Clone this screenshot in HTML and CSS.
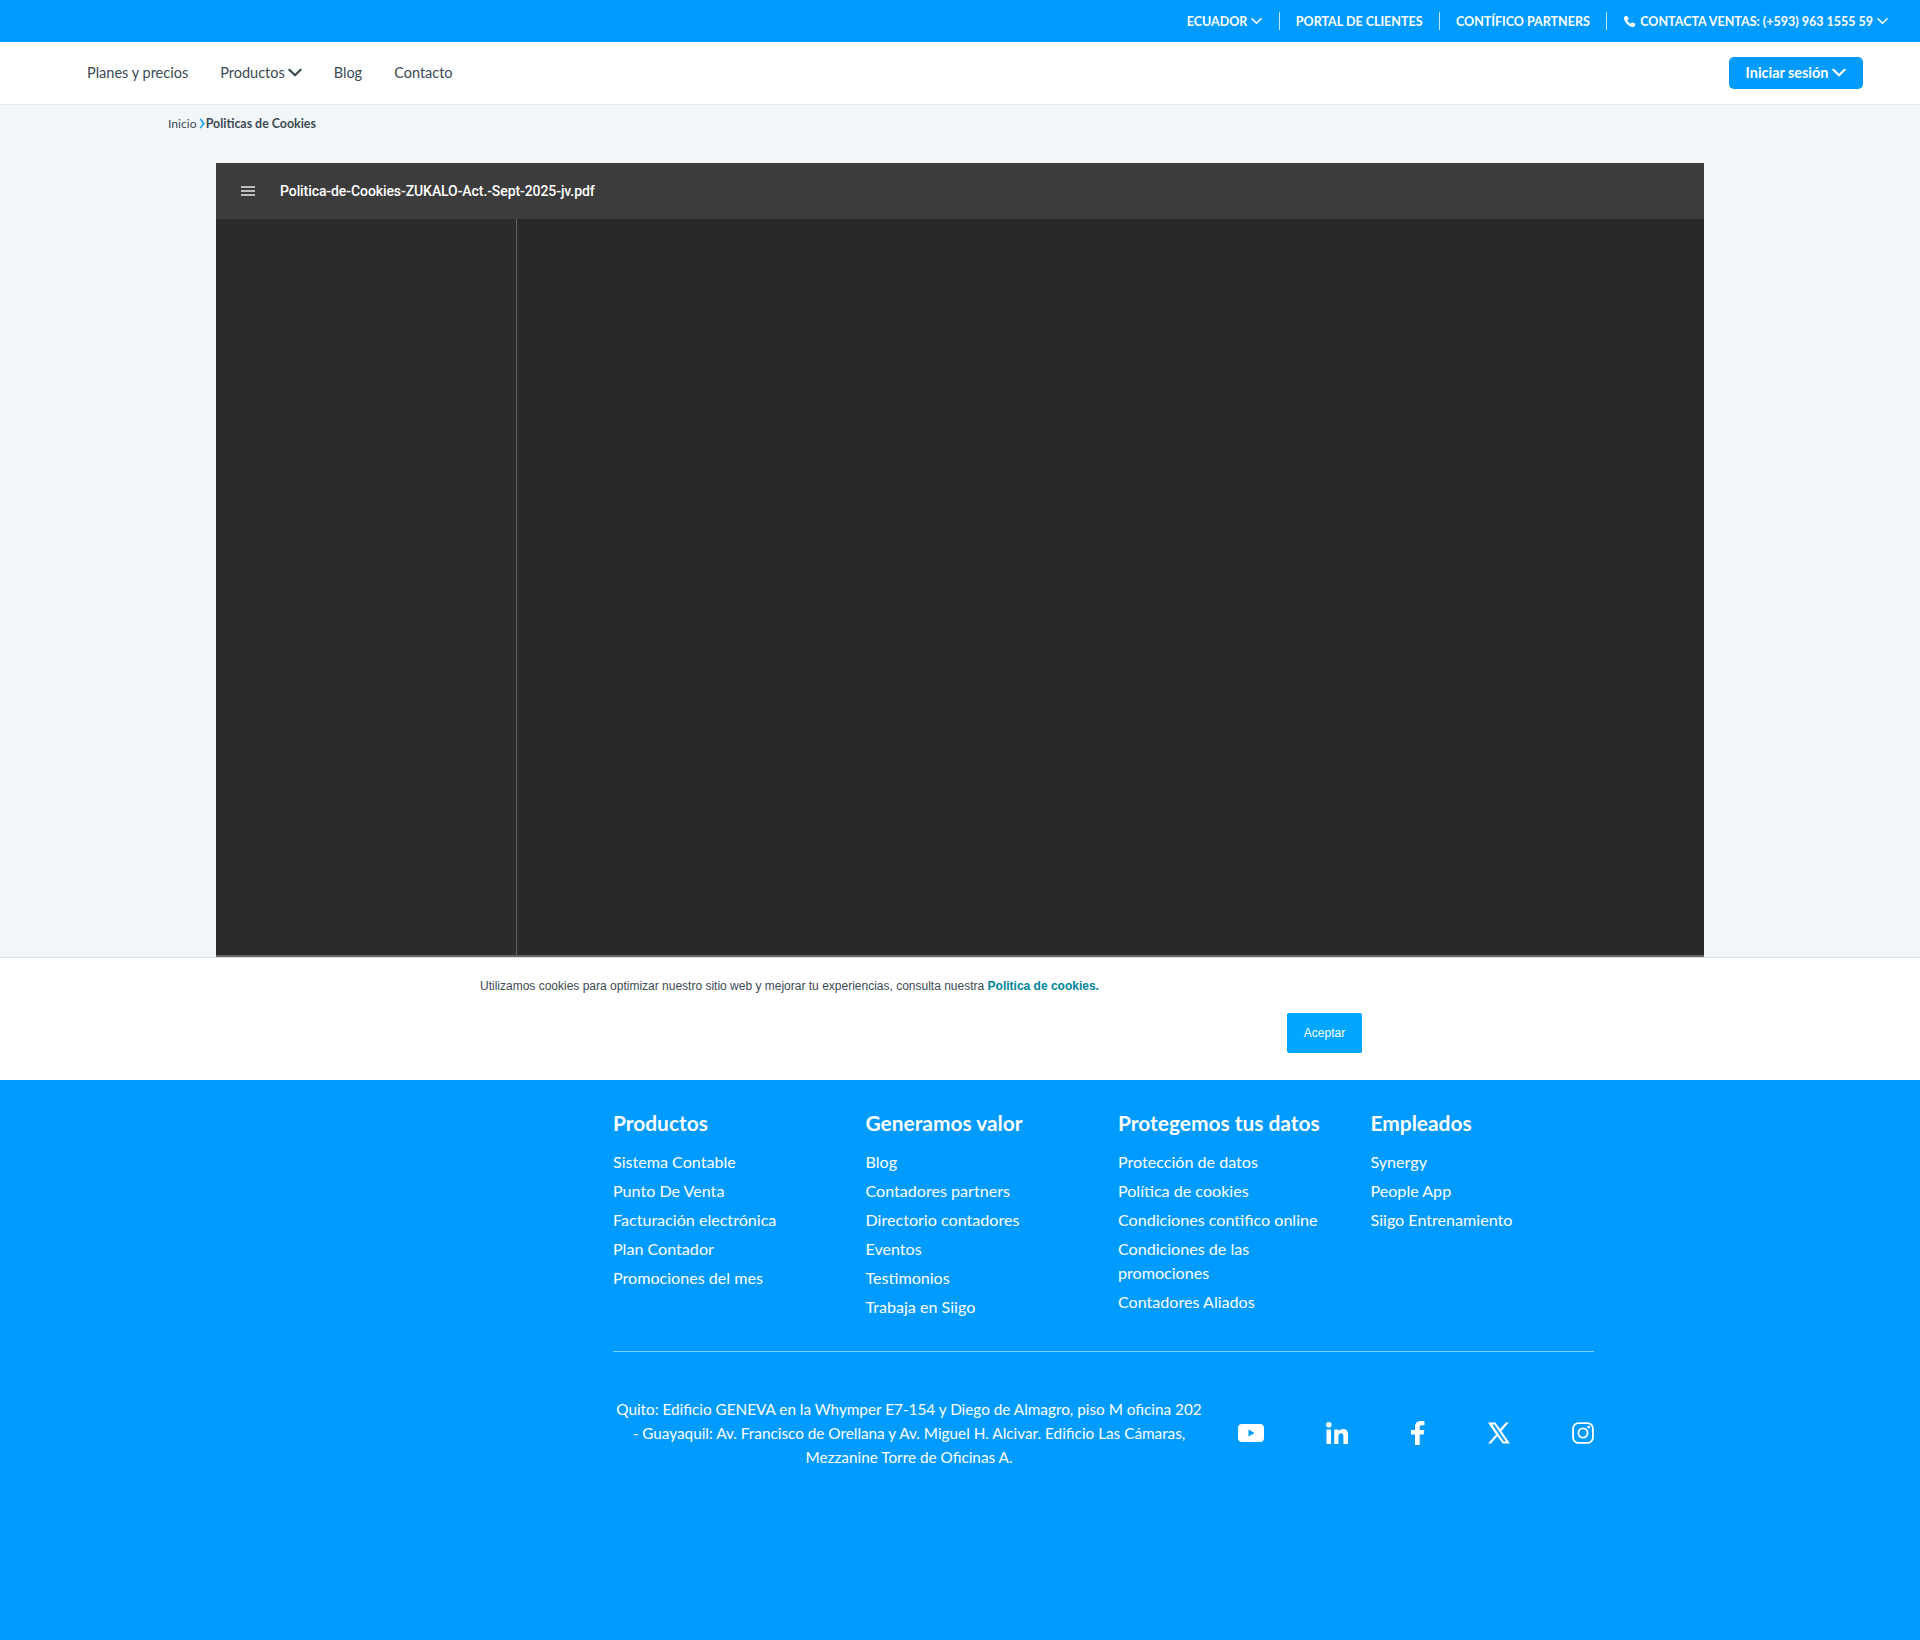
FILE: index.html
```html
<!DOCTYPE html>
<html lang="es">
<head>
<meta charset="utf-8">
<title>Políticas de Cookies</title>
<link rel="stylesheet" href="styles.css">
</head>
<body>
<div class="topbar">
  <a class="top-item">ECUADOR <svg class="chev" viewBox="0 0 12 8"><path d="M1 1.500 6 6.500 11 1.500"/></svg></a>
  <span class="sep"></span>
  <a class="top-item">PORTAL DE CLIENTES</a>
  <span class="sep"></span>
  <a class="top-item">CONTÍFICO PARTNERS</a>
  <span class="sep"></span>
  <a class="top-item"><svg class="phone" viewBox="0 0 24 24"><path d="M6.600 1.500 3.400 2.600C2 3.200 1.600 4.600 1.900 6.400c1 6.800 8.900 14.800 15.700 15.700 1.800.3 3.200-.1 3.800-1.500l1.100-3.200c.2-.6 0-1.200-.6-1.500l-4.300-2.100c-.5-.3-1.100-.2-1.500.3l-1.700 2.100c-3-1.300-5.300-3.700-6.600-6.600l2.100-1.700c.5-.4.600-1 .3-1.500L8.100 2.100c-.3-.6-.9-.8-1.500-.6z"/></svg> CONTACTA VENTAS: (+593) 963 1555 59 <svg class="chev" viewBox="0 0 12 8"><path d="M1 1.500 6 6.500 11 1.500"/></svg></a>
</div>
<header class="nav">
  <nav class="nav-links">
    <a>Planes y precios</a>
    <a>Productos <svg class="chev-lg" viewBox="0 0 12 8"><path d="M1 1.500 6 6.500 11 1.500"/></svg></a>
    <a>Blog</a>
    <a>Contacto</a>
  </nav>
  <button class="login">Iniciar sesión <svg class="chev-lg" viewBox="0 0 12 8"><path d="M1 1.500 6 6.500 11 1.500"/></svg></button>
</header>
<main class="main">
  <div class="crumbs"><span>Inicio</span><svg class="crumb-chev" viewBox="0 0 6 12"><path d="M1 1 5 6 1 11"/></svg><b>Politicas de Cookies</b></div>
  <section class="viewer">
    <div class="viewer-bar">
      <svg class="burger" viewBox="0 0 14 10"><path d="M0 1h14M0 5h14M0 9h14"/></svg>
      <span class="pdf-name">Politica-de-Cookies-ZUKALO-Act.-Sept-2025-jv.pdf</span>
    </div>
    <div class="viewer-body">
      <div class="viewer-side"></div>
      <div class="viewer-page"></div>
    </div>
  </section>
</main>
<section class="cookie">
  <p>Utilizamos cookies para optimizar nuestro sitio web y mejorar tu experiencias, consulta nuestra <a>Politica de cookies.</a></p>
  <div class="cookie-action"><button>Aceptar</button></div>
</section>
<footer class="footer">
  <div class="footer-inner">
    <div class="cols">
      <div class="col">
        <h4>Productos</h4>
        <a>Sistema Contable</a><a>Punto De Venta</a><a>Facturación electrónica</a><a>Plan Contador</a><a>Promociones del mes</a>
      </div>
      <div class="col">
        <h4>Generamos valor</h4>
        <a>Blog</a><a>Contadores partners</a><a>Directorio contadores</a><a>Eventos</a><a>Testimonios</a><a>Trabaja en Siigo</a>
      </div>
      <div class="col">
        <h4>Protegemos tus datos</h4>
        <a>Protección de datos</a><a>Política de cookies</a><a>Condiciones contifico online</a><a>Condiciones de las promociones</a><a>Contadores Aliados</a>
      </div>
      <div class="col">
        <h4>Empleados</h4>
        <a>Synergy</a><a>People App</a><a>Siigo Entrenamiento</a>
      </div>
    </div>
    <div class="foot-bottom">
      <p class="address">Quito: Edificio GENEVA en la Whymper E7-154 y Diego de Almagro, piso M oficina 202 - Guayaquil: Av. Francisco de Orellana y Av. Miguel H. Alcivar. Edificio Las Cámaras, Mezzanine Torre de Oficinas A.</p>
      <div class="social">
        <svg class="ic-yt" viewBox="0 0 26 18"><path fill-rule="evenodd" d="M4 0h18a4 4 0 0 1 4 4v10a4 4 0 0 1-4 4H4a4 4 0 0 1-4-4V4a4 4 0 0 1 4-4zM10.500 5.500v7l6-3.500z"/></svg>
        <svg class="ic-in" viewBox="0 0 22 22"><circle cx="2.800" cy="2.800" r="2.800"/><path d="M.5 7.500h4.600V22H.5zM8.200 7.500h4.400v2c.8-1.400 2.400-2.400 4.400-2.400 3.800 0 5 2.300 5 6V22h-4.600v-7.800c0-1.900-.5-3-2-3-1.700 0-3 1.100-3 3.200V22H8.200z"/></svg>
        <svg class="ic-fb" viewBox="0 0 14 24"><path d="M4 24V13.500H0V9h4V6c0-4 2.400-6 6-6 1.600 0 3 .1 3.500.2v4.100h-2.500c-1.900 0-2.300.9-2.300 2.200V9h4.600l-.6 4.500h-4V24z"/></svg>
        <svg class="ic-x" viewBox="0 0 24 24"><path fill-rule="evenodd" d="M0 .5h8l5.200 7.100L19.500.5h3.200l-8 9.300L24 23.500h-8l-5.800-7.900-6.900 7.900H.1l8.600-9.900zM4.600 2.800l12.600 18.400h2.400L7 2.800z"/></svg>
        <svg class="ic-ig" viewBox="0 0 24 24"><rect x="1.200" y="1.200" width="21.600" height="21.600" rx="6" class="ig-line"/><circle cx="12" cy="12" r="5" class="ig-line"/><circle cx="18.300" cy="5.700" r="1.500"/></svg>
      </div>
    </div>
  </div>
</footer>
</body>
</html>
```
FILE: styles.css
```css
* { box-sizing: border-box; }
html, body { margin: 0; padding: 0; }
body { width: 1920px; height: 1640px; overflow: hidden; font-family: "Lato", "Noto Sans", sans-serif; background: #f3f6f9; color: #333f48; }
p, h4 { margin: 0; }
button { font-family: inherit; border: 0; cursor: pointer; }

.topbar { height: 42px; background: #009bff; color: #fff; display: flex; justify-content: flex-end; align-items: center; padding-right: 32px; font-size: 12.500px; font-weight: 700; }
.top-item { display: flex; align-items: center; gap: 4px; white-space: nowrap; }
.sep { width: 1px; height: 18px; background: rgba(255,255,255,.75); margin: 0 16.250px; }
.chev, .chev-lg { fill: none; stroke: currentColor; stroke-linecap: round; stroke-linejoin: round; }
.chev { width: 11px; height: 8px; stroke-width: 1.700; }
.chev-lg { width: 14px; height: 9px; stroke-width: 2; }
.phone { width: 13px; height: 13px; fill: #fff; }

.nav { height: 63px; background: #fff; border-bottom: 1px solid #e6eaee; display: flex; align-items: center; justify-content: space-between; padding: 0 57px 0 87px; }
.nav-links { display: flex; gap: 32px; font-size: 14.500px; color: #3c4a54; margin-bottom: 2px; }
.nav-links a { display: flex; align-items: center; gap: 3px; }
.login { width: 134px; height: 32px; background: #009bff; color: #fff; border-radius: 5px; font-size: 14.400px; font-weight: 700; display: flex; align-items: center; justify-content: center; gap: 4px; padding-bottom: 2px; }

.main { height: 852px; padding-top: 10px; overflow: hidden; }
.crumbs { display: flex; align-items: center; height: 16px; margin-left: 168px; font-size: 12.200px; color: #3c4a54; }
.crumbs b { font-weight: 700; font-size: 12.400px; }
.crumb-chev { width: 6px; height: 11px; margin: 0 1px 0 2px; fill: none; stroke: #009bff; stroke-width: 1.600; }
.viewer { width: 1488px; margin: 32px 0 0 216px; height: 794px; background: #292929; border-bottom: 2px solid #666; display: flex; flex-direction: column; }
.viewer-bar { height: 56px; background: #3c3c3c; display: flex; align-items: center; padding-left: 25px; color: #fff; }
.burger { width: 14px; height: 10px; stroke: #e8e8e8; stroke-width: 1.500; fill: none; }
.pdf-name { margin-left: 25px; font-family: "Roboto", sans-serif; font-size: 14px; font-weight: 500; letter-spacing: -0.080px; }
.viewer-body { flex: 1; display: flex; }
.viewer-side { width: 301px; border-right: 1px solid #5f6368; background: #2a2b2d; }
.viewer-page { flex: 1; }

.cookie { height: 123px; background: #fff; border-top: 1px solid #d9dde0; font-family: "Liberation Sans", Arial, sans-serif; font-size: 12px; color: #3c4a54; padding: 21px 0 0 480px; }
.cookie a { color: #00859b; font-weight: 700; }
.cookie-action { margin: 20px 0 0 807px; }
.cookie button { width: 75px; height: 40px; background: #00a6ff; color: #fff; border-radius: 2px; font-family: inherit; font-size: 12px; }

.footer { height: 560px; background: #009bff; color: #fff; }
.footer-inner { width: 981px; margin-left: 613px; padding-top: 29px; }
.cols { display: grid; grid-template-columns: 252.500px 252.500px 252.500px 1fr; height: 243px; border-bottom: 1px solid rgba(255,255,255,.5); }
.col { display: flex; flex-direction: column; align-items: flex-start; padding-right: 30px; }
.col:last-child { padding-right: 0; }
.col h4 { font-size: 20.900px; font-weight: 700; line-height: 28px; margin-bottom: 13px; }
.col a { font-size: 16.100px; line-height: 24px; margin-bottom: 5px; }
.foot-bottom { display: flex; align-items: center; margin-top: 45px; }
.address { width: 592px; text-align: center; font-size: 15.300px; line-height: 24px; flex: none; }
.social { flex: 1; display: flex; align-items: center; justify-content: space-between; margin-left: 33px; fill: #fff; }
.ic-yt { width: 26px; height: 18px; }
.ic-in { width: 22px; height: 22px; }
.ic-fb { width: 14px; height: 24px; margin-right: 1px; }
.ic-x { width: 22px; height: 22px; }
.ic-ig { width: 22px; height: 22px; }
.ig-line { fill: none; stroke: #fff; stroke-width: 2; }
```
